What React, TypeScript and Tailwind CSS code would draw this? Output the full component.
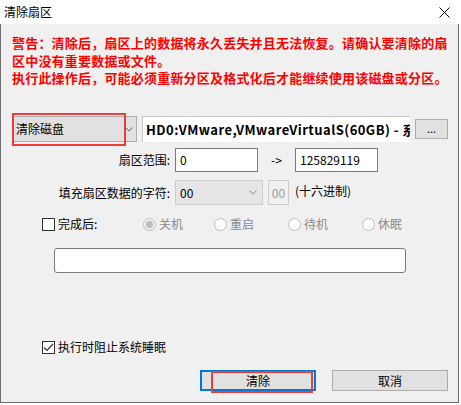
import React from "react";

const font = "font-['Noto_Sans_CJK_SC','Noto_Sans',sans-serif]";

function Chevron({ color = "#606060" }: { color?: string }) {
  return (
    <svg width="8" height="5" viewBox="0 0 8 5" className="shrink-0">
      <path d="M0.5 0.5L4 4L7.5 0.5" fill="none" stroke={color} strokeWidth="1" />
    </svg>
  );
}

function Radio({ label, checked, className }: { label: string; checked?: boolean; className: string }) {
  return (
    <div className={`flex items-center ${className}`}>
      <span
        className={`w-[13px] h-[13px] rounded-full border border-[#bcbcbc] flex items-center justify-center ${
          checked ? "bg-[#f0f0f0]" : "bg-white"
        }`}
      >
        {checked && <span className="w-[7px] h-[7px] rounded-full bg-[#bcbcbc]" />}
      </span>
      <span className="ml-[3px] w-[24px] text-[12px] text-[#8a8a8a] leading-none whitespace-nowrap">{label}</span>
    </div>
  );
}

export default function App() {
  return (
    <div className={`w-[461px] h-[405px] bg-white ${font} text-black overflow-hidden`}>
      <div className="w-[459px] h-[403px] flex flex-col">
        {/* Title bar */}
        <div className="h-[24px] bg-white flex items-center justify-between shrink-0">
          <span className="ml-[4px] text-[12px] leading-none">清除扇区</span>
          <svg width="11" height="11" viewBox="0 0 11 11" className="mr-[9px]">
            <path d="M0.5 0.5L10.5 10.5M10.5 0.5L0.5 10.5" stroke="#000" strokeWidth="1" />
          </svg>
        </div>

        {/* Body */}
        <div className="flex-1 bg-[#f0f0f0] border border-t-0 border-[#6e6e6e] flex flex-col">
          <div className="h-[92px] pt-[10px] pl-[11px] text-[13px] font-bold text-[#ff0000] leading-[17.5px] tracking-[0.2px]">
            警告：清除后，扇区上的数据将永久丢失并且无法恢复。请确认要清除的扇
            <br />
            区中没有重要数据或文件。
            <br />
            执行此操作后，可能必须重新分区及格式化后才能继续使用该磁盘或分区。
          </div>

          {/* Disk selection row */}
          <div className="h-[26px] flex items-center">
            <div className="relative ml-[12px] w-[124px] h-[26px] bg-[#e1e1e1] border border-[#adadad] flex items-center justify-between pl-[2px] pr-[3px]">
              <span className="text-[12px] leading-none">清除磁盘</span>
              <Chevron />
              <div className="absolute left-[-2px] top-[-4px] w-[114px] h-[33px] border-2 border-[#ee3b3b]" />
            </div>
            <div className="ml-[5px] w-[268px] h-[26px] bg-white border-l border-t border-[#c8c8c8] overflow-hidden whitespace-nowrap flex items-center pl-[3px]">
              <span className="text-[13px] font-bold leading-none tracking-[0.45px]">HD0:VMware,VMwareVirtualS(60GB) - 系</span>
            </div>
            <div className="ml-[5px] w-[33px] h-[20px] bg-[#e1e1e1] border border-[#adadad] flex items-center justify-center">
              <span className="text-[11px] leading-none pb-[2px]">...</span>
            </div>
          </div>

          {/* Sector range */}
          <div className="mt-[6px] h-[24px] flex items-center text-[12px]">
            <div className="w-[169px] text-right leading-none">扇区范围:</div>
            <div className="ml-[5px] w-[83px] h-[24px] bg-white border border-[#7a7a7a] flex items-center pl-[4px] leading-none">0</div>
            <div className="w-[37px] text-center leading-none">-&gt;</div>
            <div className="w-[83px] h-[24px] bg-white border border-[#7a7a7a] flex items-center pl-[4px] leading-none">125829119</div>
          </div>

          {/* Fill char */}
          <div className="mt-[8px] h-[25px] flex items-center text-[12px]">
            <div className="w-[169px] text-right leading-none">填充扇区数据的字符:</div>
            <div className="ml-[5px] w-[88px] h-[25px] bg-[#e5e5e5] border border-[#cccccc] flex items-center justify-between pl-[4px] pr-[5px]">
              <span className="leading-none">00</span>
              <Chevron color="#8a8a8a" />
            </div>
            <div className="ml-[5px] w-[21px] h-[25px] bg-[#f0f0f0] border border-[#cccccc] flex items-center justify-center text-[#9a9a9a] leading-none">
              00
            </div>
            <div className="ml-[6px] leading-none pb-[3px]">(十六进制)</div>
          </div>

          {/* After completion */}
          <div className="mt-[12px] h-[14px] flex items-center">
            <span className="ml-[41px] w-[13px] h-[13px] border border-[#333333] bg-white" />
            <span className="ml-[3px] w-[39px] text-[12px] leading-none whitespace-nowrap">完成后:</span>
            <Radio label="关机" checked className="ml-[46px]" />
            <Radio label="重启" className="ml-[31px]" />
            <Radio label="待机" className="ml-[34px]" />
            <Radio label="休眠" className="ml-[34px]" />
          </div>

          <div className="mt-[17px] ml-[53px] w-[352px] h-[25px] bg-white border border-[#7a7a7a] rounded-[3px]" />

          {/* Prevent sleep */}
          <div className="mt-[67px] h-[14px] flex items-center">
            <span className="ml-[41px] w-[13px] h-[13px] border border-[#333333] bg-white flex items-center justify-center">
              <svg width="11" height="9" viewBox="0 0 11 9">
                <path d="M1 4.5L4 7.5L10 1" fill="none" stroke="#333" strokeWidth="1.2" />
              </svg>
            </span>
            <span className="ml-[3px] text-[12px] leading-none">执行时阻止系统睡眠</span>
          </div>

          {/* Buttons */}
          <div className="mt-[16px] flex">
            <div className="relative ml-[199px] w-[116px] h-[21px] border-2 border-[#0078d7] bg-[#e1e1e1] flex items-center justify-center">
              <span className="text-[12px] leading-none">清除</span>
              <div className="absolute left-[9px] top-[-1px] w-[102px] h-[22px] border-2 border-[#ee3b3b]" />
            </div>
            <div className="ml-[16px] w-[116px] h-[21px] border border-[#adadad] bg-[#e1e1e1] flex items-center justify-center">
              <span className="text-[12px] leading-none">取消</span>
            </div>
          </div>
        </div>
      </div>
    </div>
  );
}
